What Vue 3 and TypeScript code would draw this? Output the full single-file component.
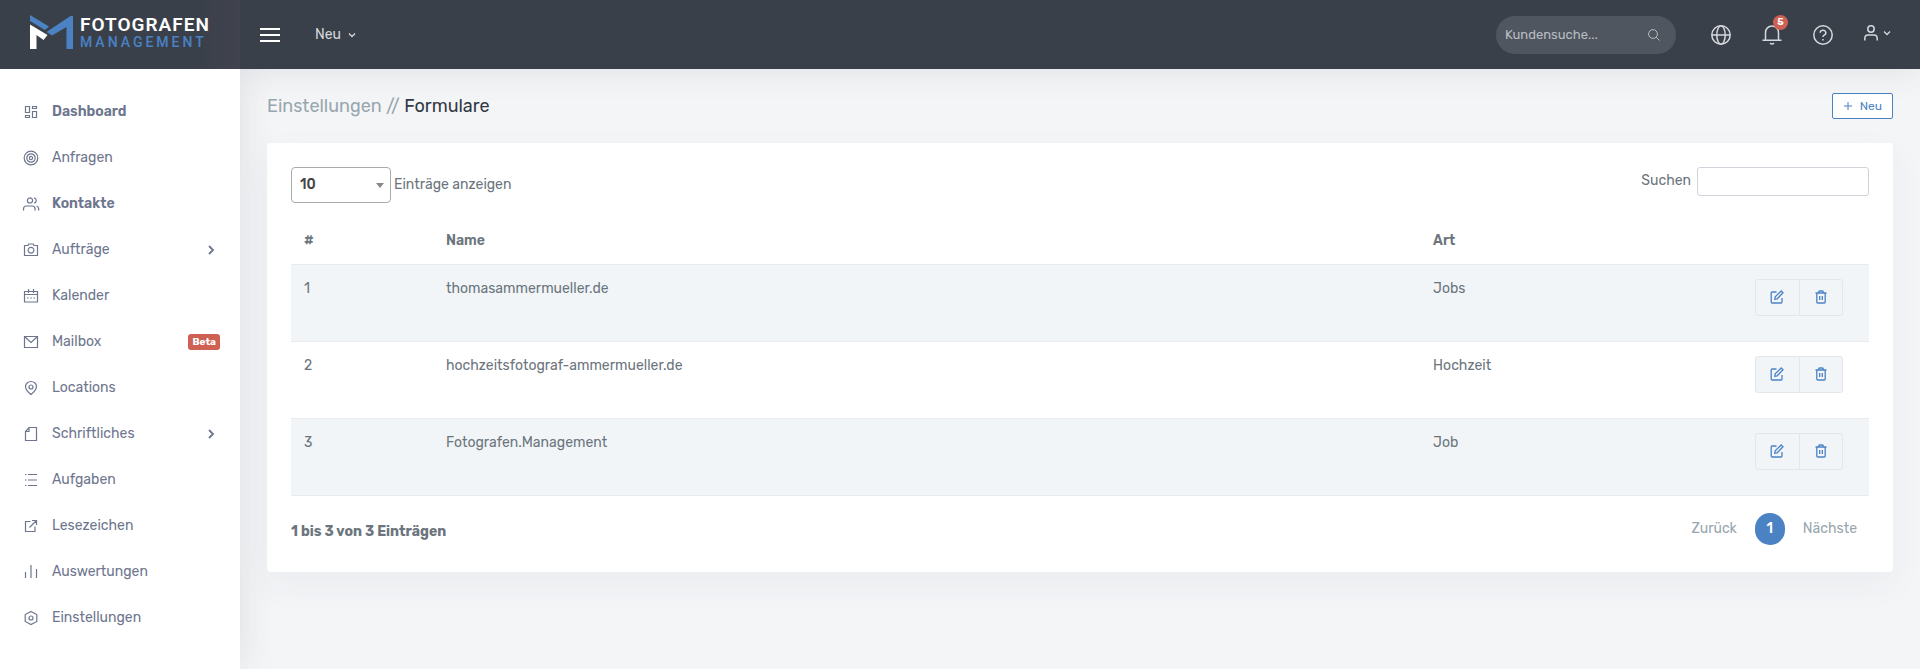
<script setup lang="ts">
import { ref } from 'vue'

interface NavItem {
  label: string
  icon: string
  strong?: boolean
  children?: boolean
  badge?: string
}

const nav: NavItem[] = [
  { label: 'Dashboard', icon: 'M1.5 1.5h4v6h-4zM1.5 10.5h4v2h-4zM8.5 1.5h4v2h-4zM8.5 6.5h4v6h-4z', strong: true },
  { label: 'Anfragen', icon: 'M7 .2a6.800 6.800 0 1 0 0 13.600a6.800 6.800 0 1 0 0-13.600M7 2.800a4.200 4.200 0 1 0 0 8.400a4.200 4.200 0 1 0 0-8.400M7 5.400a1.600 1.600 0 1 0 0 3.200a1.600 1.600 0 1 0 0-3.200' },
  { label: 'Kontakte', icon: 'M6 .8a2.600 2.600 0 1 0 0 5.200a2.600 2.600 0 1 0 0-5.200M-.5 13.500v-1.500q0-3 3-3h5.600q3 0 3 3v1.500M10 .8q2.300.6 2.300 2.600t-2.300 2.600M12.500 9q2.200.6 2.200 2.800v1.700', strong: true },
  { label: 'Aufträge', icon: 'M.5 2.500h3.500l.8-1.500h4.400l.8 1.500h3.500v10h-13zM7 4.300a2.900 2.900 0 1 0 0 5.800a2.900 2.900 0 1 0 0-5.800', children: true },
  { label: 'Kalender', icon: 'M.5 2.500h13v10.500h-13zM.5 5.500h13M4.500 0v4M9.500 0v4M3 9h1.500M6.200 9h1.600M9.500 9h1.500' },
  { label: 'Mailbox', icon: 'M.5 1.500h13v11h-13zM.5 1.500l6.500 6l6.500-6', badge: 'Beta' },
  { label: 'Locations', icon: 'M7 13.500q-5.500-4.500-5.500-8a5.500 5 0 0 1 11 0q0 3.500-5.500 8zM7 4a2 2 0 1 0 0 4a2 2 0 1 0 0-4' },
  { label: 'Schriftliches', icon: 'M5 .5h7.500v13h-11v-9zM5 .5v4h-3.500', children: true },
  { label: 'Aufgaben', icon: 'M4 1.500h9M4 7h9M4 12.500h9M1 1.500h1.500M1 7h1.500M1 12.500h1.500' },
  { label: 'Lesezeichen', icon: 'M6.500 2.500h-5v10h9.500v-5M5.500 8.500l7-7M8 1.500h4.500v4.500' },
  { label: 'Auswertungen', icon: 'M1.500 13v-6M7 13v-13M12.500 13v-9' },
  { label: 'Einstellungen', icon: 'M7 .5l5.800 3v7l-5.800 3l-5.800-3v-7zM7 5a2 2 0 1 0 0 4a2 2 0 1 0 0-4' },
]

const rows = [
  { id: 1, name: 'thomasammermueller.de', type: 'Jobs' },
  { id: 2, name: 'hochzeitsfotograf-ammermueller.de', type: 'Hochzeit' },
  { id: 3, name: 'Fotografen.Management', type: 'Job' },
]

const pageSize = ref('10')
const query = ref('')
const customer = ref('')
</script>

<template>
  <div class="app">
    <header class="topbar">
      <a class="brand" href="#">
        <svg class="mark" viewBox="0 0 43 34" aria-hidden="true">
          <path fill="#4a82c4" d="M0 0L19 11.500L15 15L0 6z" />
          <path fill="#4a82c4" d="M43 1V34H36.500V12L22 20.500L16.500 17L40.500 1z" />
          <path fill="#fff" d="M0 9.500L17.500 20L13.500 25L6.500 20V34H0z" />
        </svg>
        <span class="wordmark">
          <span class="word-top">FOTOGRAFEN</span>
          <span class="word-bottom">MANAGEMENT</span>
        </span>
      </a>
      <div class="bar">
        <button class="burger" type="button" aria-label="Menü"><span></span><span></span><span></span></button>
        <button class="new-menu" type="button">
          Neu
          <svg class="caret" viewBox="0 0 8 6" aria-hidden="true"><path d="M1 1.500l3 3l3-3" /></svg>
        </button>
        <div class="tools">
          <label class="customer-search">
            <input v-model="customer" type="text" placeholder="Kundensuche..." aria-label="Kundensuche" />
            <svg viewBox="0 0 12 12" aria-hidden="true"><circle cx="5" cy="5" r="4.400" /><path d="M8.200 8.200l3.300 3.300" /></svg>
          </label>
          <button class="tool" type="button" aria-label="Sprache">
            <svg viewBox="0 0 20 20" aria-hidden="true">
              <circle cx="10" cy="10" r="9.200" /><ellipse cx="10" cy="10" rx="4.200" ry="9.200" /><path d="M1 10h18" />
            </svg>
          </button>
          <button class="tool" type="button" aria-label="Benachrichtigungen">
            <svg viewBox="0 0 20 20" aria-hidden="true">
              <path d="M3.500 15V7.500a6.500 6.500 0 0 1 13 0V15M.5 15.200h19M8 18.200q2 1.500 4 0" />
            </svg>
            <span class="count">5</span>
          </button>
          <button class="tool" type="button" aria-label="Hilfe">
            <svg viewBox="0 0 20 20" aria-hidden="true">
              <circle cx="10" cy="10" r="9.200" /><path d="M7.200 7.800a2.800 2.600 0 1 1 4 2.300q-1.200.7-1.200 1.900M10 14v1.500" />
            </svg>
          </button>
          <button class="account" type="button" aria-label="Konto">
            <svg class="person" viewBox="0 0 14 16" aria-hidden="true">
              <circle cx="7" cy="4" r="3.200" /><path d="M.8 15.500v-2q0-3.500 3.200-3.500h6q3.200 0 3.200 3.500v2" />
            </svg>
            <svg class="caret" viewBox="0 0 8 6" aria-hidden="true"><path d="M1 1.500l3 3l3-3" /></svg>
          </button>
        </div>
      </div>
    </header>

    <div class="body">
      <nav class="sidebar">
        <a v-for="item in nav" :key="item.label" class="nav-item" :class="{ strong: item.strong }" href="#">
          <svg class="nav-icon" viewBox="0 0 14 14" aria-hidden="true"><path :d="item.icon" /></svg>
          <span class="nav-label">{{ item.label }}</span>
          <span v-if="item.badge" class="beta">{{ item.badge }}</span>
          <svg v-if="item.children" class="chevron" viewBox="0 0 6 10" aria-hidden="true"><path d="M1 1l4 4l-4 4" /></svg>
        </a>
      </nav>

      <main class="content">
        <div class="page-head">
          <h1>Einstellungen // <span>Formulare</span></h1>
          <button class="add" type="button">
            <svg viewBox="0 0 8 8" aria-hidden="true"><path d="M4 0v8M0 4h8" /></svg>
            Neu
          </button>
        </div>

        <section class="card">
          <div class="filters">
            <label class="length">
              <span class="select-wrap">
                <select v-model="pageSize" aria-label="Einträge anzeigen">
                  <option>10</option>
                  <option>25</option>
                  <option>50</option>
                </select>
              </span>
              Einträge anzeigen
            </label>
            <label class="search">Suchen <input v-model="query" type="search" /></label>
          </div>

          <table>
            <thead>
              <tr>
                <th class="col-id">#</th>
                <th class="col-name">Name</th>
                <th class="col-type">Art</th>
                <th class="col-actions"></th>
              </tr>
            </thead>
            <tbody>
              <tr v-for="row in rows" :key="row.id">
                <td>{{ row.id }}</td>
                <td>{{ row.name }}</td>
                <td>{{ row.type }}</td>
                <td>
                  <div class="actions">
                    <button type="button" aria-label="Bearbeiten">
                      <svg viewBox="0 0 14 14" aria-hidden="true">
                        <path d="M6.500 2H2.200Q1.200 2 1.200 3V12Q1.200 13 2.200 13H11Q12 13 12 12V8M11.200 1L13 2.800L7.200 8.800L4.800 9.200L5.200 6.900z" />
                      </svg>
                    </button>
                    <button type="button" aria-label="Löschen">
                      <svg viewBox="0 0 14 14" aria-hidden="true">
                        <path d="M1.500 3h11M4.700 3V2Q4.700 1 5.700 1H8.300Q9.300 1 9.300 2V3M2.800 3V12Q2.800 13 3.800 13H10.200Q11.200 13 11.200 12V3M5.700 6V10M8.300 6V10" />
                      </svg>
                    </button>
                  </div>
                </td>
              </tr>
            </tbody>
          </table>

          <div class="table-foot">
            <strong>1 bis 3 von 3 Einträgen</strong>
            <div class="pager">
              <a href="#">Zurück</a>
              <a class="current" href="#" aria-current="page">1</a>
              <a href="#">Nächste</a>
            </div>
          </div>
        </section>
      </main>
    </div>
  </div>
</template>

<style>
body {
  margin: 0;
  background: #f4f5f7;
}
</style>

<style scoped>
.app {
  display: flex;
  flex-direction: column;
  min-height: 100vh;
  font: 14px/20px Rubik, Roboto, 'Liberation Sans', sans-serif;
  color: #6c757d;
}
.app *, .app *::before, .app *::after {
  box-sizing: border-box;
}
button, input, select {
  font: inherit;
  color: inherit;
}
button {
  padding: 0;
  border: 0;
  background: none;
  cursor: pointer;
}
a {
  color: inherit;
  text-decoration: none;
}
svg {
  display: block;
  flex: none;
  fill: none;
  stroke: currentColor;
}

/* top bar */
.topbar {
  position: relative;
  z-index: 2;
  display: flex;
  height: 69px;
  background: #3a404a;
  color: #d5d8dc;
  box-shadow: 0 0 35px rgba(60, 64, 75, 0.12);
}
.brand {
  display: flex;
  gap: 7px;
  width: 240px;
  padding: 15px 0 0 30px;
  background: linear-gradient(90deg, #3a404a 84%, #41434d);
}
.mark {
  width: 43px;
  height: 34px;
  stroke: none;
}
.wordmark {
  display: flex;
  flex-direction: column;
}
.word-top {
  font: 600 19px/20px Roboto, sans-serif;
  letter-spacing: 1px;
  color: #fff;
}
.word-bottom {
  font: 500 14px/14px Roboto, sans-serif;
  letter-spacing: 3px;
  color: #4a82c4;
}
.bar {
  display: flex;
  flex: 1;
  align-items: center;
  padding: 0 29px 0 20px;
}
.burger {
  display: flex;
  flex-direction: column;
  gap: 4px;
  width: 20px;
}
.burger span {
  height: 2px;
  background: #fff;
}
.new-menu {
  display: flex;
  align-items: center;
  gap: 7px;
  margin-left: 35px;
}
.caret {
  width: 8px;
  height: 6px;
  stroke-width: 1.3;
}
.tools {
  display: flex;
  align-items: center;
  margin-left: auto;
}
.customer-search {
  display: flex;
  align-items: center;
  width: 180px;
  height: 38px;
  margin-right: 35px;
  padding: 0 16px 0 9px;
  border-radius: 19px;
  background: #50565f;
  color: #b9bdc2;
  font-size: 13px;
}
.customer-search input {
  flex: 1;
  min-width: 0;
  padding: 0;
  border: 0;
  outline: 0;
  background: none;
}
.customer-search input::placeholder {
  color: #b9bdc2;
}
.customer-search svg {
  width: 12px;
  height: 12px;
}
.tool {
  position: relative;
  margin-right: 31px;
}
.tool svg {
  width: 20px;
  height: 20px;
  stroke-width: 1.5;
}
.count {
  position: absolute;
  top: -10px;
  right: -6px;
  width: 15px;
  height: 15px;
  border-radius: 50%;
  background: #cf6054;
  color: #fff;
  font-size: 10px;
  font-weight: 700;
  line-height: 15px;
}
.account {
  display: flex;
  align-items: center;
  gap: 5px;
  padding-bottom: 4px;
}
.person {
  width: 14px;
  height: 16px;
  stroke-width: 1.5;
}

/* side navigation */
.body {
  display: flex;
  flex: 1;
}
.sidebar {
  position: relative;
  z-index: 3;
  width: 240px;
  padding-top: 20px;
  background: #fff;
  color: #6e768e;
  box-shadow: 0 0 35px rgba(60, 64, 75, 0.12);
  clip-path: inset(0 -40px 0 0);
}
.nav-item {
  display: flex;
  align-items: center;
  height: 46px;
  padding: 0 20px 0 24px;
}
.strong {
  font-weight: 600;
}
.nav-icon {
  width: 14px;
  height: 14px;
  margin-right: 14px;
  overflow: visible;
  stroke-width: 1.2;
}
.nav-label {
  flex: 1;
}
.chevron {
  width: 6px;
  height: 10px;
  margin-right: 6px;
  overflow: visible;
  stroke-width: 1.8;
}
.beta {
  padding: 0 4px;
  border-radius: 3px;
  background: #cf6054;
  color: #fff;
  font-size: 10px;
  font-weight: 700;
  line-height: 16px;
  letter-spacing: normal;
}

/* page */
.content {
  flex: 1;
  min-width: 0;
  padding: 24px 27px;
}
.page-head {
  display: flex;
  align-items: flex-start;
  justify-content: space-between;
  margin-bottom: 24px;
}
h1 {
  margin: 0;
  color: #98a6ad;
  font-size: 18px;
  font-weight: 400;
  line-height: 26px;
}
h1 span {
  color: #323a46;
}
.add {
  display: flex;
  align-items: center;
  gap: 8px;
  height: 26px;
  padding: 0 10px 0 11px;
  border: 1px solid #4a82c4;
  border-radius: 2px;
  background: #fff;
  color: #4a82c4;
  font-size: 12px;
}
.add svg {
  width: 8px;
  height: 8px;
}
.card {
  padding: 24px 24px 21px;
  border-radius: 4px;
  background: #fff;
  box-shadow: 0 12px 35px rgba(60, 64, 75, 0.05);
}
.filters {
  display: flex;
  align-items: flex-start;
  justify-content: space-between;
}
.length {
  display: flex;
  align-items: center;
  gap: 3px;
}
.select-wrap {
  position: relative;
}
.select-wrap::after {
  content: '';
  position: absolute;
  top: 16px;
  right: 7px;
  border: 4px solid transparent;
  border-top: 5px solid #888;
  border-bottom: 0;
  pointer-events: none;
}
select {
  display: block;
  width: 100px;
  height: 36px;
  padding: 0 8px;
  border: 1px solid #aaa;
  border-radius: 4px;
  background: #fff;
  color: #444;
  font-weight: 500;
  appearance: none;
}
.search {
  display: flex;
  gap: 6px;
  line-height: 28px;
}
.search input {
  width: 172px;
  height: 29px;
  padding: 0 8px;
  border: 1px solid #ced4da;
  border-radius: 3px;
  background: #fff;
}
table {
  width: 100%;
  margin-top: 10px;
  border-collapse: collapse;
  table-layout: fixed;
}
.col-id {
  width: 9%;
}
.col-actions {
  width: 127px;
}
.col-type {
  width: 20.4%;
}
th {
  height: 51px;
  padding: 6px 13px 0;
  font-weight: 600;
  text-align: left;
}
td {
  height: 77px;
  padding: 14px 13px 0;
  border-top: 1px solid #e8ecf0;
  border-bottom: 1px solid #e8ecf0;
  vertical-align: top;
}
tbody tr:nth-child(odd) {
  background: #f1f5f8;
}
.actions {
  display: flex;
  width: 88px;
  border: 1px solid #e3e7ec;
  border-radius: 3px;
  background: #f1f5f8;
  color: #4a82c4;
}
.actions button {
  display: grid;
  flex: 1;
  height: 35px;
  place-items: center;
}
.actions button + button {
  border-left: 1px solid #e3e7ec;
}
.actions svg {
  width: 14px;
  height: 14px;
  stroke-width: 1.3;
}
.table-foot {
  display: flex;
  justify-content: space-between;
  margin-top: 17px;
}
.table-foot strong {
  font-weight: 700;
  line-height: 38px;
}
.pager {
  display: flex;
  gap: 6px;
  color: #98a6ad;
  line-height: 32px;
}
.pager a {
  height: 32px;
  padding: 0 12px;
}
.pager .current {
  width: 30px;
  padding: 0;
  border-radius: 15px;
  background: #4a82c4;
  color: #fff;
  font-weight: 500;
  text-align: center;
}
</style>
